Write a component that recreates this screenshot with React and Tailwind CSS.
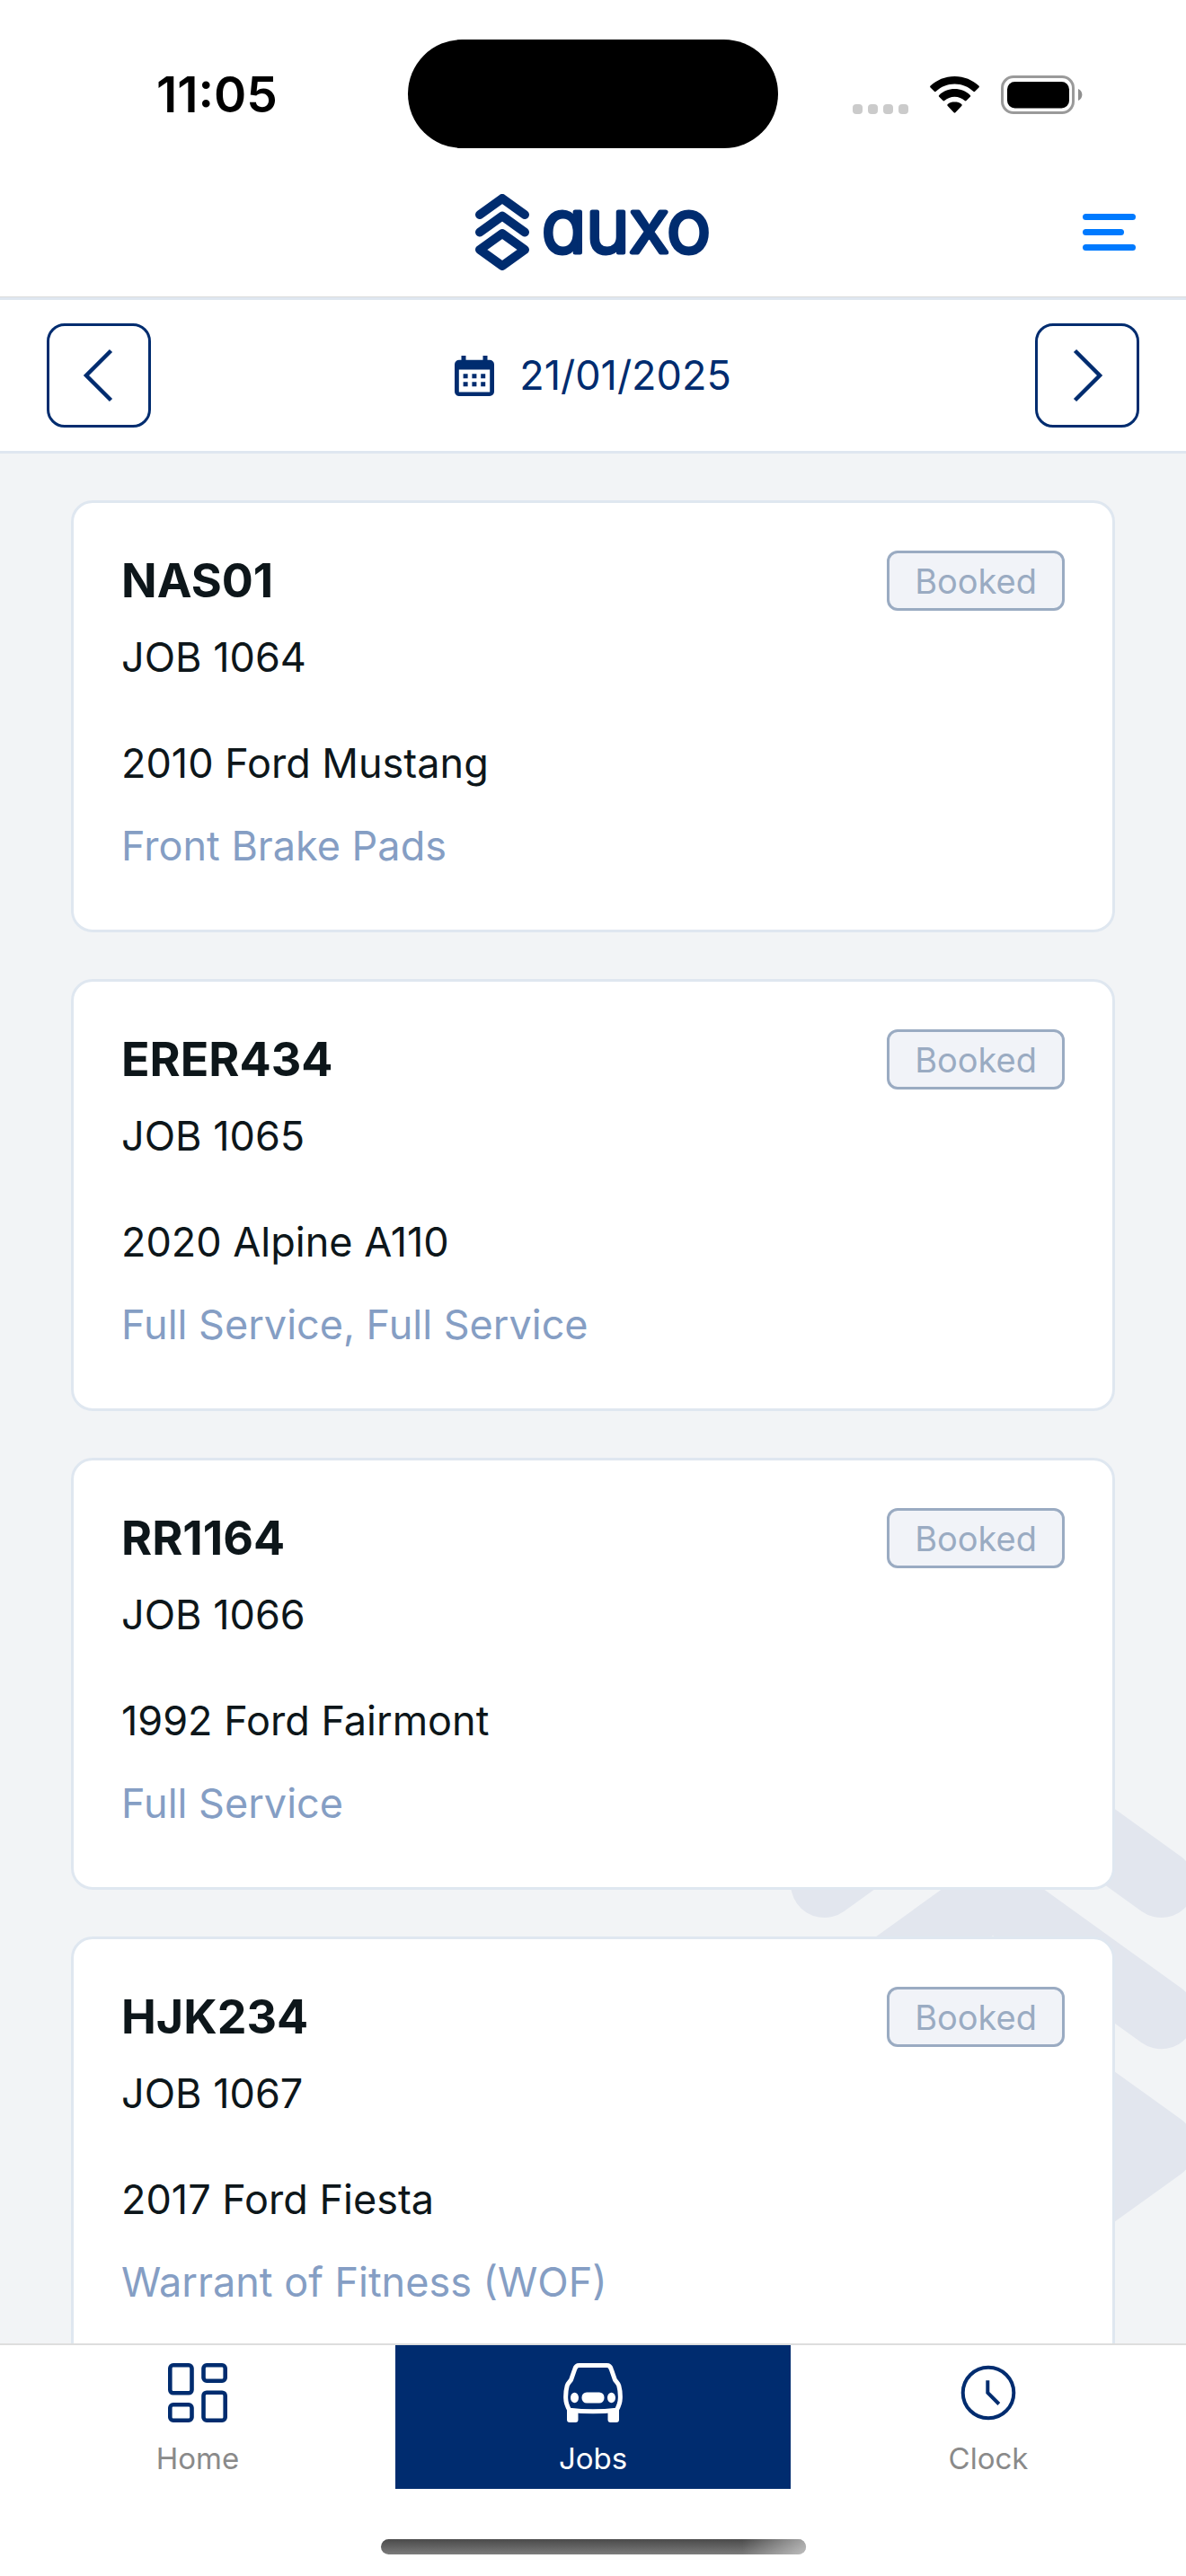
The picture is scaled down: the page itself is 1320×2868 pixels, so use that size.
import React from "react";

const jobs = [
  { plate: "NAS01", number: "JOB 1064", vehicle: "2010 Ford Mustang", work: "Front Brake Pads", status: "Booked" },
  { plate: "ERER434", number: "JOB 1065", vehicle: "2020 Alpine A110", work: "Full Service, Full Service", status: "Booked" },
  { plate: "RR1164", number: "JOB 1066", vehicle: "1992 Ford Fairmont", work: "Full Service", status: "Booked" },
  { plate: "HJK234", number: "JOB 1067", vehicle: "2017 Ford Fiesta", work: "Warrant of Fitness (WOF)", status: "Booked" },
];

function AuxoMark({ className }) {
  return (
    <svg viewBox="0 0 60 85" fill="none" stroke="currentColor" strokeWidth="10" strokeLinecap="round" strokeLinejoin="round" className={className} aria-hidden="true">
      <path d="M5 23 30 5 55 23" />
      <path d="M5 42.5 30 24.5 55 42.5" />
      <path d="M30 44 55 62 30 80 5 62Z" />
    </svg>
  );
}

function WifiIcon() {
  return (
    <svg viewBox="0 0 55 41" className="w-[55px] h-[41px]" aria-hidden="true">
      <path d="M27.5 0C17 0 7.400 4.100 0.600 10.600a1.300 1.300 0 0 0 0 1.900l4.300 4.300a1.300 1.300 0 0 0 1.800 0C12.200 11.700 19.500 8.600 27.500 8.600s15.300 3.100 20.800 8.200a1.300 1.300 0 0 0 1.800 0l4.300-4.300a1.300 1.300 0 0 0 0-1.900C47.600 4.100 38 0 27.500 0Z" />
      <path d="M27.500 14.100c-6.700 0-12.800 2.600-17.300 6.800a1.300 1.300 0 0 0 0 1.900l4.300 4.300a1.300 1.300 0 0 0 1.800 0c3-2.700 6.900-4.300 11.200-4.300s8.200 1.600 11.200 4.300a1.300 1.300 0 0 0 1.800 0l4.300-4.300a1.300 1.300 0 0 0 0-1.900c-4.500-4.200-10.600-6.800-17.300-6.800Z" />
      <path d="M27.500 28.200c-2.900 0-5.600 1-7.700 2.800a1.300 1.300 0 0 0 0 1.900l6.800 7.300a1.300 1.300 0 0 0 1.800 0l6.800-7.300a1.300 1.300 0 0 0 0-1.900c-2.100-1.800-4.800-2.800-7.700-2.800Z" />
    </svg>
  );
}

function BatteryIcon() {
  return (
    <svg viewBox="0 0 91 43" className="w-[91px] h-[43px]" aria-hidden="true">
      <rect x="1.500" y="1.500" width="79" height="40" rx="12.500" fill="none" stroke="#9a9a9a" strokeWidth="3" />
      <rect x="7" y="7" width="69" height="29.500" rx="8.500" />
      <path d="M86 15c2.700 1.200 4.400 3.600 4.400 6.500S88.700 26.800 86 28Z" fill="#8f8f8f" />
    </svg>
  );
}

function StatusBar() {
  return (
    <div className="grid grid-cols-[1fr_412px_1fr] h-[186px] pt-11 items-start text-black">
      <div className="h-[123px] flex items-center pl-[174px] text-[55px] font-semibold">11:05</div>
      <div className="h-[121px] rounded-full bg-black" />
      <div className="h-[123px] flex items-center justify-end gap-6 pr-[115px]">
        <div className="flex gap-1.5 self-end pb-10">
          <span className="size-[11px] rounded-sm bg-[#cbcbcb]" />
          <span className="size-[11px] rounded-sm bg-[#cbcbcb]" />
          <span className="size-[11px] rounded-sm bg-[#cbcbcb]" />
          <span className="size-[11px] rounded-sm bg-[#cbcbcb]" />
        </div>
        <WifiIcon />
        <BatteryIcon />
      </div>
    </div>
  );
}

function Header() {
  return (
    <header className="grid grid-cols-[1fr_auto_1fr] items-center h-[145px] px-14 border-b border-[#dcdcdc]">
      <a href="#home" aria-label="auxo" className="col-start-2 flex items-center gap-4 text-[#002c6f]">
        <AuxoMark className="w-[60px] h-[85px]" />
        <svg viewBox="0 0 186 85" className="w-[186px] h-[85px] overflow-visible" aria-hidden="true">
          <text
            x="-2"
            y="65"
            fill="currentColor"
            stroke="currentColor"
            strokeWidth="5"
            strokeLinejoin="round"
            className="text-[82px] font-light [font-feature-settings:'cv11']"
          >
            auxo
          </text>
        </svg>
      </a>
      <button type="button" aria-label="Menu" className="justify-self-end flex flex-col gap-2.5">
        <span className="w-[59px] h-[7px] rounded-full bg-[#007aff]" />
        <span className="w-[46px] h-[7px] rounded-full bg-[#007aff]" />
        <span className="w-[59px] h-[7px] rounded-full bg-[#007aff]" />
      </button>
    </header>
  );
}

function ArrowButton({ label, d }) {
  return (
    <button
      type="button"
      aria-label={label}
      className="size-[116px] rounded-[20px] border-3 border-[#002c6f] flex items-center justify-center"
    >
      <svg viewBox="0 0 60 60" fill="none" stroke="currentColor" strokeWidth="4.500" className="size-[60px]" aria-hidden="true">
        <path d={d} />
      </svg>
    </button>
  );
}

function DateBar() {
  return (
    <div className="flex items-center justify-between h-[174px] px-[52px] border-y-3 border-[#dfe7f0] text-[#002c6f]">
      <ArrowButton label="Previous day" d="M43.500 2.500 16 30l27.500 27.500" />
      <button type="button" className="flex items-center gap-7 text-[45px]">
        <svg viewBox="0 0 44 45" className="w-[44px] h-[45px]" aria-hidden="true">
          <path
            fill="currentColor"
            fillRule="evenodd"
            d="M7.500 0h5v4.700h19V0h5v4.700H39a5 5 0 0 1 5 5V40a5 5 0 0 1-5 5H5a5 5 0 0 1-5-5V9.700a5 5 0 0 1 5-5h2.500ZM4.800 15.600v24.800h34.400V15.600ZM9.600 20.200h5v5h-5Zm9.800 0h5v5h-5Zm9.800 0h5v5h-5ZM9.600 29.200h5v5h-5Zm9.800 0h5v5h-5Zm9.800 0h5v5h-5Z"
          />
        </svg>
        21/01/2025
      </button>
      <ArrowButton label="Next day" d="M16.500 2.500 44 30 16.500 57.500" />
    </div>
  );
}

function JobCard({ job }) {
  return (
    <li className="relative h-[481px] shrink-0 p-[53px] rounded-3xl border-3 border-[#dfe7f0] bg-white text-[45px] leading-[60px] text-[#0d161a]">
      <div className="flex items-start justify-between">
        <h2 className="text-[52px] leading-[67px] font-bold">{job.plate}</h2>
        <span className="h-[67px] px-7 flex items-center rounded-xl border-3 border-[#9aabc2] bg-[#f1f3f8] text-[38px] text-[#9aabc2]">
          {job.status}
        </span>
      </div>
      <p className="mt-[22px]">{job.number}</p>
      <p className="mt-[58px]">{job.vehicle}</p>
      <p className="mt-8 text-[#859ec4]">{job.work}</p>
    </li>
  );
}

function HomeIcon() {
  return (
    <svg viewBox="0 0 66 66" fill="none" stroke="#002c6f" strokeWidth="4.600" className="size-[66px]" aria-hidden="true">
      <rect x="2.300" y="2.300" width="24.200" height="31" rx="3.500" />
      <rect x="39.500" y="2.300" width="24.200" height="17.400" rx="3.500" />
      <rect x="2.300" y="46.300" width="24.200" height="17.400" rx="3.500" />
      <rect x="39.500" y="32.700" width="24.200" height="31" rx="3.500" />
    </svg>
  );
}

function CarIcon() {
  return (
    <svg viewBox="0 0 66 66" className="size-[66px]" aria-hidden="true">
      <path
        d="M17.500 2.500h31c2.500 0 4 1.700 4.800 4.200l4 11.500c.6 1.800 3.700 4 4.500 7 1.200 4.500 1.700 9 1.500 14-.1 4.500-1.500 8.500-4 13-17 2-35.600 2-52.600 0-2.500-4.500-3.900-8.500-4-13-.2-5 .3-9.500 1.500-14 .8-3 3.900-5.200 4.500-7l4-11.500c.8-2.500 2.300-4.200 4.800-4.200Z"
        fill="none"
        stroke="white"
        strokeWidth="5"
        strokeLinejoin="round"
      />
      <path d="M4 50.500c4 1.500 8 1.700 12.500 2V63a3 3 0 0 1-3 3H7a3 3 0 0 1-3-3Zm58 0c-4 1.500-8 1.700-12.500 2V63a3 3 0 0 0 3 3H59a3 3 0 0 0 3-3Z" fill="white" />
      <ellipse cx="12.500" cy="38.500" rx="4.500" ry="5.700" fill="white" />
      <ellipse cx="53.500" cy="38.500" rx="4.500" ry="5.700" fill="white" />
      <rect x="20.500" y="32.500" width="25" height="12" rx="5.500" fill="white" />
    </svg>
  );
}

function ClockIcon() {
  return (
    <svg viewBox="0 0 66 66" fill="none" stroke="#002c6f" strokeWidth="4" className="size-[66px]" aria-hidden="true">
      <circle cx="33" cy="33" r="28.300" />
      <path d="M32.300 19.300V33l12.500 12.500" />
    </svg>
  );
}

function TabBar() {
  return (
    <nav className="border-t-2 border-[#dedede] bg-white">
      <div className="grid grid-cols-3 text-[33px] leading-[40px] text-[#8a8a8a]">
        <a href="#home" className="h-[160px] pt-5 flex flex-col items-center gap-5">
          <HomeIcon />
          Home
        </a>
        <a href="#jobs" aria-current="page" className="h-[160px] pt-5 flex flex-col items-center gap-5 bg-[#002c6f] text-white">
          <CarIcon />
          Jobs
        </a>
        <a href="#clock" className="h-[160px] pt-5 flex flex-col items-center gap-5">
          <ClockIcon />
          Clock
        </a>
      </div>
      <div className="h-[97px] pt-14 flex justify-center">
        <div className="w-[473px] h-[17px] rounded-full bg-linear-to-b from-[#4a4a4a] to-[#7c7c7c] overflow-hidden">
          <div className="h-full bg-linear-to-r from-transparent from-85% to-white/50" />
        </div>
      </div>
    </nav>
  );
}

export default function App() {
  return (
    <div className="h-screen flex flex-col bg-white font-['Inter',sans-serif]">
      <StatusBar />
      <Header />
      <DateBar />
      <main className="relative flex-1 min-h-0 overflow-hidden bg-[#f2f4f6]">
        <AuxoMark className="absolute -right-[10px] bottom-[47px] w-[450px] text-[#e2e6ee]" />
        <ul className="flex flex-col gap-[52px] h-full pt-[52px] px-[79px] overflow-y-auto [scrollbar-width:none]">
          {jobs.map((job) => (
            <JobCard key={job.number} job={job} />
          ))}
        </ul>
      </main>
      <TabBar />
    </div>
  );
}
